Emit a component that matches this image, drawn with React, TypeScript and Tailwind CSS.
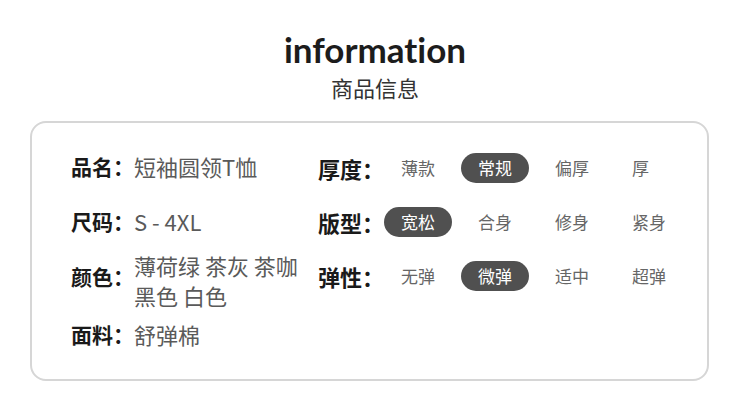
import React from "react";

type Spec = {
  label: string;
  options: string[];
  active: number;
};

const specs: Spec[] = [
  { label: "厚度：", options: ["薄款", "常规", "偏厚", "厚"], active: 1 },
  { label: "版型：", options: ["宽松", "合身", "修身", "紧身"], active: 0 },
  { label: "弹性：", options: ["无弹", "微弹", "适中", "超弹"], active: 1 },
];

const cjk = "font-['Noto_Sans_CJK_SC','Noto_Sans',sans-serif]";

const SpecRow = ({ spec }: { spec: Spec }) => {
  return (
    <div className="flex items-center h-[30px]">
      <span className="w-[66px] shrink-0 whitespace-nowrap text-[22px] leading-[30px] font-bold text-[#1a1a1a]">
        {spec.label}
      </span>
      <div className="grid grid-cols-[77px_77px_77px_77px]">
        {spec.options.map((opt, i) => (
          <div key={opt} className="flex">
            <span
              className={
                i === spec.active
                  ? "h-[30px] px-[17px] rounded-full bg-[#505050] text-white text-[17px] leading-[30px] whitespace-nowrap"
                  : "h-[30px] px-[17px] text-[#666] text-[17px] leading-[30px] whitespace-nowrap"
              }
            >
              {opt}
            </span>
          </div>
        ))}
      </div>
    </div>
  );
};

const Field = ({
  label,
  lines,
  className,
}: {
  label: string;
  lines: string[];
  className?: string;
}) => {
  return (
    <div className={"flex items-start " + (className ?? "")}>
      <span
        className={
          "shrink-0 whitespace-nowrap text-[21px] leading-[30px] font-bold text-[#1a1a1a] " +
          (lines.length > 1 ? "mt-[11px]" : "")
        }
      >
        {label}
      </span>
      <div className="text-[22px] leading-[30px] text-[#5a5a5a]">
        {lines.map((l) => (
          <div key={l} className="whitespace-nowrap">{l}</div>
        ))}
      </div>
    </div>
  );
};

export default function App() {
  return (
    <div className={"w-[750px] h-[418px] bg-white flex flex-col items-center " + cjk}>
      <h1 className="mt-[32px] font-['Lato',sans-serif] font-bold text-[35px] leading-[35px] text-[#1c1c1c] [font-variant-ligatures:none]">
        information
      </h1>
      <p className="mt-[5px] text-[22px] leading-[30px] text-[#333]">商品信息</p>
      <div className="mt-[19px] w-[679px] h-[260px] self-start ml-[30px] rounded-[16px] border-2 border-[#d6d6d6] flex pl-[39px] pt-[28px]">
        <div className="w-[247px] flex flex-col">
          <Field label="品名：" lines={["短袖圆领T恤"]} />
          <Field label="尺码：" lines={["S - 4XL"]} className="mt-[25px]" />
          <Field
            label="颜色："
            lines={["薄荷绿 茶灰 茶咖", "黑色 白色"]}
            className="mt-[14px]"
          />
          <Field label="面料：" lines={["舒弹棉"]} className="mt-[9px]" />
        </div>
        <div className="flex flex-col gap-[24px] pt-[2px]">
          {specs.map((s) => (
            <SpecRow key={s.label} spec={s} />
          ))}
        </div>
      </div>
    </div>
  );
}
